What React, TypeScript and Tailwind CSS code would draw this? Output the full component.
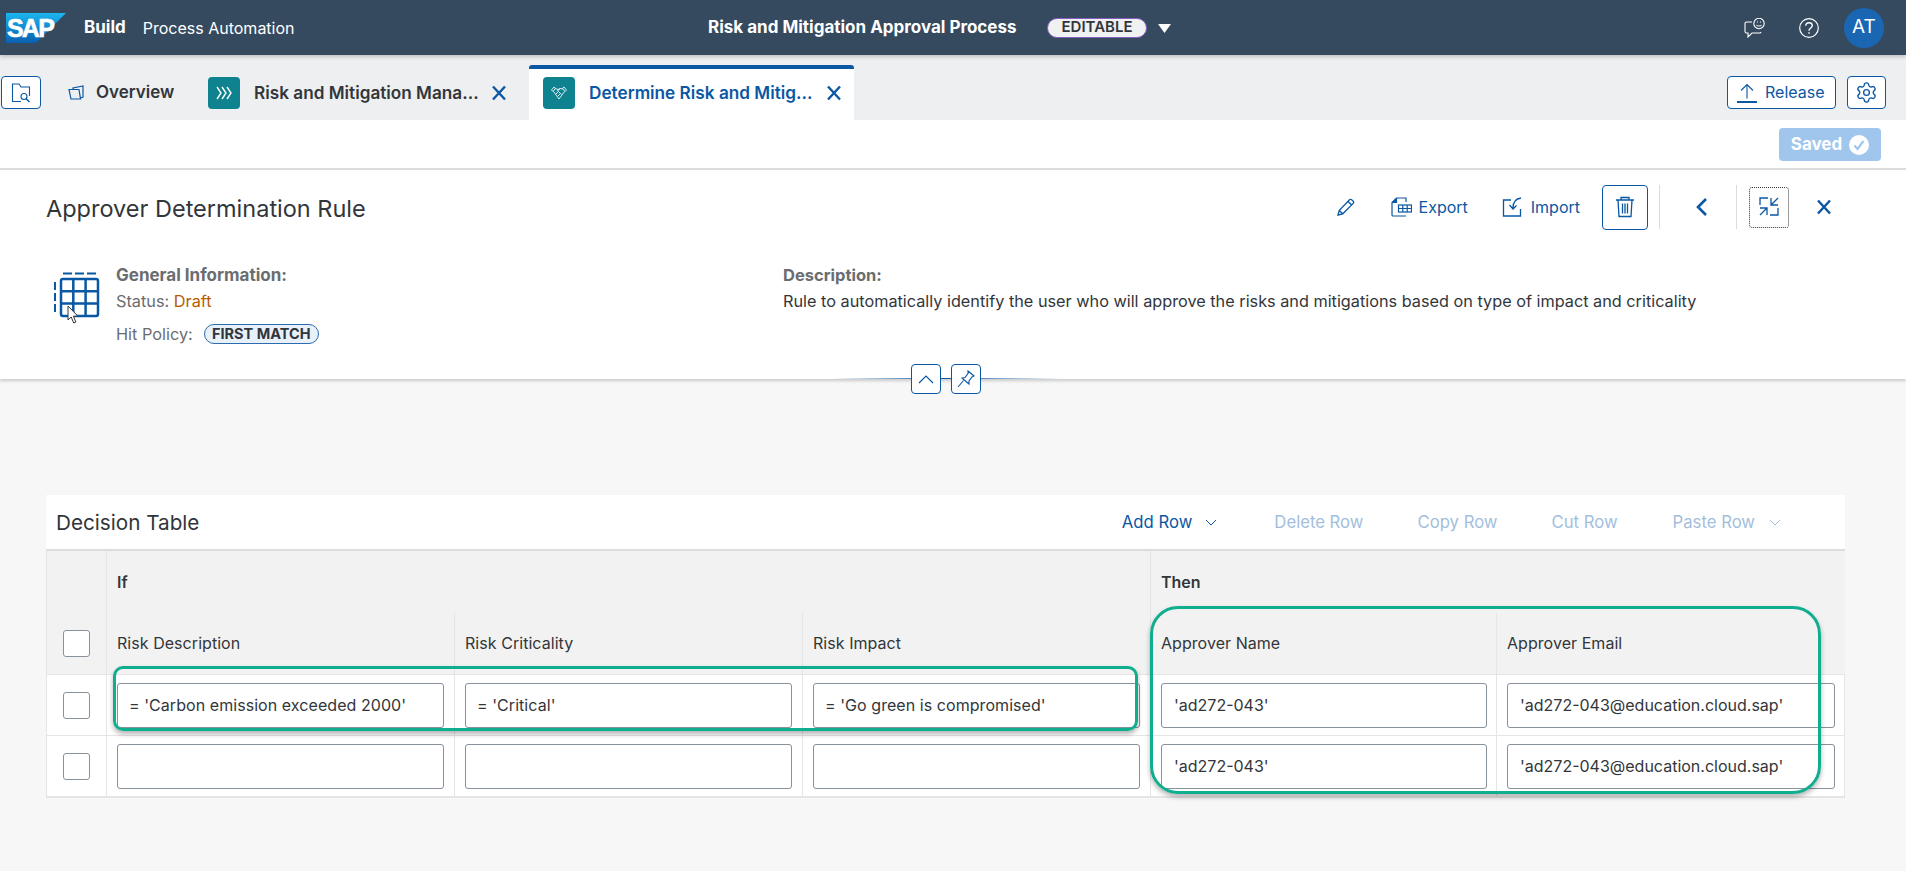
import React from "react";
import { Settings } from "lucide-react";

const B = "#0a57a4";

function XIcon({ size = 16, className = "" }: { size?: number; className?: string }) {
  return (
    <svg width={size} height={size} viewBox="0 0 16 16" className={className} fill="none" stroke={B} strokeWidth="2.400">
      <path d="M2 1.500 L14 14.500 M14 1.500 L2 14.500" />
    </svg>
  );
}

function SapLogo() {
  return (
    <svg width="60" height="30" viewBox="0 0 60 30" className="shrink-0">
      <defs>
        <linearGradient id="sapg" x1="0" y1="0" x2="0" y2="1">
          <stop offset="0" stopColor="#1bb6f0" />
          <stop offset="1" stopColor="#0a5fb0" />
        </linearGradient>
      </defs>
      <polygon points="0,0 60,0 30,30 0,30" fill="url(#sapg)" />
      <text x="1" y="24" fill="#fff" stroke="#fff" strokeWidth="0.600" fontFamily="'Liberation Sans',sans-serif" fontWeight="700" fontSize="25" letterSpacing="-1.800">SAP</text>
    </svg>
  );
}

function Tile({ children }: { children: React.ReactNode }) {
  return <div className="w-[32px] h-[32px] rounded-[4px] bg-[#0f828f] flex items-center justify-center shrink-0">{children}</div>;
}

function Input({ value = "", wide }: { value?: string; wide?: boolean }) {
  return (
    <div className={`h-[45px] w-full rounded-[3px] border border-[#89919a] bg-white flex items-center text-[#32363a] text-[16px] whitespace-nowrap overflow-hidden ${wide ? "pl-[11px] tracking-[0.06px]" : "pl-[12px]"}`}>
      {value}
    </div>
  );
}

function Check() {
  return <div className="w-[27px] h-[27px] rounded-[3px] border border-[#89919a] bg-white" />;
}

function Row({ values, last }: { values: string[]; last?: boolean }) {
  const b = last ? "border-b-2 border-[#e5e5e5]" : "border-b border-[#e5e5e5]";
  return (
    <>
      <div className={`${b} border-l border-[#e5e5e5] flex items-center justify-center bg-white`}><Check /></div>
      {values.map((v, i) => (
        <div key={i} className={`${b} border-l ${i === 4 ? "border-r" : ""} border-[#e5e5e5] bg-white flex items-center pl-[10px] ${i >= 3 ? "pr-[9px]" : "pr-[10px]"}`}>
          <Input value={v} wide={i < 3} />
        </div>
      ))}
    </>
  );
}

export default function App() {
  return (
    <div className="w-full h-[871px] overflow-hidden bg-[#f7f7f7] text-[#32363a] text-[16px] font-['Inter','Liberation_Sans',sans-serif]">
      {/* shell bar */}
      <header className="h-[55px] bg-[#354a5f] flex items-center text-white relative shadow-[0_2px_4px_rgba(0,0,0,0.2)] z-10">
        <div className="w-[708px] shrink-0 flex items-center">
          <div className="ml-[6px]"><SapLogo /></div>
          <span className="ml-[18px] font-bold text-[17px]">Build</span>
          <span className="ml-[17px] text-[16px]">Process Automation</span>
        </div>
        <span className="w-[339px] shrink-0 font-bold text-[17px] whitespace-nowrap">Risk and Mitigation Approval Process</span>
        <span className="w-[100px] h-[20px] rounded-full bg-[#eff1f3] border border-[#8a5cc0] text-[#32363a] text-[15px] font-semibold flex items-center justify-center">EDITABLE</span>
        <svg width="13" height="10" viewBox="0 0 13 10" className="ml-[11px]"><path d="M0 1h13L6.500 10z" fill="#fff" /></svg>
        <div className="ml-auto flex items-center">
          <svg width="21" height="20" viewBox="0 0 21 20" fill="none" stroke="#fff" strokeWidth="1.100">
            <path d="M8 4H2.500A1.500 1.500 0 0 0 1 5.500v8A1.500 1.500 0 0 0 2.500 15H4v4l4-4h8a1.500 1.500 0 0 0 1-1" />
            <circle cx="15" cy="5.500" r="5.200" />
            <path d="M12.500 7c1.300 1.400 3.700 1.400 5 0M13 4h1M16 4h1" />
          </svg>
          <svg width="20" height="20" viewBox="0 0 20 20" fill="none" stroke="#fff" strokeWidth="1.200" className="ml-[34px]">
            <circle cx="10" cy="10" r="9.300" />
            <path d="M6.800 7.800c0-1.900 1.400-3.100 3.300-3.100s3.200 1.200 3.200 2.800c0 2.500-3.300 2.500-3.300 5.200M10 14.300v1.500" strokeWidth="1.400" />
          </svg>
          <div className="ml-[25px] mr-[22px] w-[40px] h-[40px] rounded-full bg-[#1b66b3] flex items-center justify-center text-[19px]">AT</div>
        </div>
      </header>

      {/* tabs */}
      <div className="h-[65px] bg-[#edeff0] flex">
        <div className="mt-[21px] ml-[1px] w-[40px] h-[33px] border border-[#0a57a4] rounded-[4px] bg-white flex items-center justify-center">
          <svg width="20" height="20" viewBox="0 0 20 20" fill="none" stroke={B} strokeWidth="1.100">
            <path d="M10 18.500H1.500V1h6.500l2 3h8.500v9" />
            <circle cx="13" cy="13.500" r="3" /><path d="M15.200 15.700l3.300 3.300" strokeWidth="1.500" />
          </svg>
        </div>
        <div className="mt-[21px] h-[33px] flex items-center ml-[27px]">
          <svg width="16" height="15" viewBox="0 0 16 15" fill="none" stroke={B} strokeWidth="1.200">
            <path d="M1 4.500h10l1.500 9.500H3zM5 4.500V3l10-2v11l-2.500 1" />
          </svg>
          <span className="ml-[12px] font-semibold text-[17px] w-[112px]">Overview</span>
        </div>
        <div className="mt-[22px] h-[32px] flex items-center">
          <Tile>
            <svg width="18" height="18" viewBox="0 0 18 18" fill="none" stroke="#fff" strokeWidth="1.400"><path d="M2 3l4 6-4 6M7 3l4 6-4 6M12 3l4 6-4 6" /></svg>
          </Tile>
          <span className="ml-[14px] w-[237px] font-semibold text-[17.200px] whitespace-nowrap">Risk and Mitigation Mana...</span>
          <XIcon />
        </div>
        <div className="ml-[22px] mt-[10px] w-[325px] h-[55px] bg-white border-t-4 border-[#0a57a4] rounded-t-[3px] flex items-start pl-[14px] pt-[8px]">
          <Tile>
            <svg width="16" height="14" viewBox="0 0 16 14" fill="none" stroke="#fff" strokeWidth="1" opacity="0.85">
              <path d="M0.500 4l2.500-3 1.500 1.200L2 5.500zM15.500 4L13 1l-1.500 1.200L14 5.500zM4 2.500L7 3.500 9 2.500l3 .5M2.500 5.500L8 13l5.500-7.500M6 5l3-2M5 8l2.500-2.500 3 3M7 10l2-2" />
            </svg>
          </Tile>
          <span className="ml-[14px] w-[237px] h-[32px] flex items-center font-semibold text-[17.200px] text-[#0a57a4] whitespace-nowrap">Determine Risk and Mitig...</span>
          <div className="h-[32px] flex items-center"><XIcon /></div>
        </div>
        <div className="mt-[21px] ml-auto flex items-start">
          <div className="w-[109px] h-[33px] border border-[#0a57a4] rounded-[4px] bg-white flex items-center text-[#0a57a4] pl-[9px]">
            <svg width="20" height="20" viewBox="0 0 20 20" fill="none" stroke={B} strokeWidth="1.100"><path d="M10 15.500V1.500M4 7.500l6-6 6 6" /><path d="M0 19h20" strokeWidth="2" /></svg>
            <span className="ml-[8px] -mt-[2px]">Release</span>
          </div>
          <div className="ml-[11px] mr-[20px] w-[39px] h-[33px] border border-[#0a57a4] rounded-[4px] bg-white flex items-center justify-center">
            <Settings size={23} color={B} strokeWidth={1.400} />
          </div>
        </div>
      </div>

      {/* saved bar */}
      <div className="h-[50px] bg-white border-b-2 border-[#dcdcdc] flex justify-end items-start pt-[8px] pr-[25px]">
        <div className="w-[102px] h-[33px] rounded-[4px] bg-[#a0c6ee] text-white font-bold text-[17px] flex items-center justify-center">
          Saved
          <svg width="20" height="20" viewBox="0 0 20 20" className="ml-[7px]"><circle cx="10" cy="10" r="10" fill="#fff" /><path d="M5.500 10.500l3 3.500 6-8" fill="none" stroke="#a0c6ee" strokeWidth="2.200" /></svg>
        </div>
      </div>

      {/* object header */}
      <section className="relative h-[209px] bg-white shadow-[0_2px_3px_rgba(0,0,0,0.18)]">
        <div className="h-[44px] pt-[15px] box-content flex items-center pl-[46px] pr-[72px]">
          <h1 className="text-[23.500px] font-normal mt-[3px]">Approver Determination Rule</h1>
          <div className="ml-auto flex items-center text-[#0a57a4]">
            <svg width="18" height="18" viewBox="0 0 18 18" fill="none" stroke={B} strokeWidth="1.300"><path d="M1 17l1.200-4.500L12.500 1.800a1.500 1.500 0 0 1 2.200 0l1.500 1.400a1.500 1.500 0 0 1 0 2.200L5.800 15.800zM2.200 12.500L5.800 15.800M11 3.500l3.500 3.300" /></svg>
            <svg width="21" height="20" viewBox="0 0 21 20" fill="none" stroke={B} strokeWidth="1.200" className="ml-[36px]">
              <path d="M15 5V1H5.500L1 5.500V18a1 1 0 0 0 1 1h13" />
              <path d="M5.500 1v4.500H1" fill={B} />
              <rect x="7.500" y="8" width="13" height="7" fill="#fff" />
              <path d="M7.500 11.500h13M11.800 8v7M16.200 8v7" />
            </svg>
            <span className="ml-[7px]">Export</span>
            <svg width="22" height="20" viewBox="0 0 22 20" fill="none" stroke={B} strokeWidth="1.300" className="ml-[34px]">
              <path d="M9 3H1.500v16h17v-7" /><path d="M19 1c-4 .5-8 3-8 10M7.500 8l3.500 4 3.500-3.500" />
            </svg>
            <span className="ml-[7px]">Import</span>
            <div className="ml-[22px] w-[46px] h-[45px] border border-[#0a57a4] rounded-[4px] flex items-center justify-center">
              <svg width="20" height="22" viewBox="0 0 20 22" fill="none" stroke={B} strokeWidth="1.300">
                <path d="M1 4h18M6 4V1.500h8V4M3 4l1 16.500h12L17 4M7.500 7.500v10M10 7.500v10M12.500 7.500v10" />
              </svg>
            </div>
            <div className="ml-[11px] w-px h-[44px] bg-[#dcdcdc]" />
            <svg width="12" height="20" viewBox="0 0 12 20" fill="none" stroke={B} strokeWidth="2.600" className="ml-[36px]"><path d="M10 2L2 10l8 8" /></svg>
            <div className="ml-[28px] w-px h-[44px] bg-[#dcdcdc]" />
            <div className="ml-[12px] w-[40px] h-[41px] border border-dotted border-[#32363a] rounded-[3px] flex items-center justify-center">
              <svg width="20" height="20" viewBox="0 0 20 20" fill="none" stroke={B} strokeWidth="1.300">
                <path d="M1 8V1h8M19 1l-7 7M12 1v7h7M19 11v7h-8M1 18l7-7M1 11h7v7" />
              </svg>
            </div>
            <div className="ml-[27px] mr-[2px]"><XIcon /></div>
          </div>
        </div>
        <div className="flex mt-[35px] pl-[54px] text-[#6a6d70]">
          <div className="w-[62px] shrink-0">
            <svg width="46" height="54" viewBox="0 0 46 54" className="mt-[8px]" fill="none" stroke={B}>
              <path d="M9 1.500h9M21 1.500h9M33 1.500h9" strokeWidth="2" />
              <path d="M1 10v8M1 21v8M1 32v8" strokeWidth="2" />
              <rect x="7" y="7" width="37" height="37" rx="2" strokeWidth="2.500" />
              <path d="M19.300 7v37M31.600 7v37M7 19.300h37M7 31.600h37" strokeWidth="2.500" />
              <path d="M14 34v14l3.200-3 2.500 6 2.200-1-2.500-5.800 4.300-.2z" fill="#fff" stroke="#32363a" strokeWidth="1" />
            </svg>
          </div>
          <div className="w-[667px] shrink-0">
            <div className="font-bold text-[17px] h-[23px] leading-[22px]">General Information:</div>
            <div className="h-[28px] leading-[28px] text-[16.300px]">Status: <span className="text-[#b85c00]">Draft</span></div>
            <div className="mt-[7px] h-[24px] flex items-center text-[16.300px]">
              Hit Policy:
              <span className="ml-[11px] w-[115px] h-[20px] rounded-full border border-[#2b6cb0] bg-[#e8f1fa] text-[#32363a] text-[14.500px] font-bold flex items-center justify-center">FIRST MATCH</span>
            </div>
          </div>
          <div>
            <div className="font-bold text-[16.500px] h-[23px] leading-[22px]">Description:</div>
            <div className="h-[28px] leading-[28px] text-[16.250px] text-[#32363a] whitespace-nowrap">Rule to automatically identify the user who will approve the risks and mitigations based on type of impact and criticality</div>
          </div>
        </div>
        {/* expander */}
        <div className="absolute left-[831px] top-[194px] w-[230px] h-[30px] flex items-center justify-center">
          <div className="absolute left-0 right-0 top-[14px] h-px bg-gradient-to-r from-transparent via-[#0a57a4] to-transparent" />
          <div className="relative w-[30px] h-[30px] border border-[#0a57a4] rounded-[4px] bg-white flex items-center justify-center">
            <svg width="16" height="10" viewBox="0 0 16 10" fill="none" stroke={B} strokeWidth="1.200"><path d="M1 9l7-7 7 7" /></svg>
          </div>
          <div className="relative ml-[10px] w-[30px] h-[30px] border border-[#0a57a4] rounded-[4px] bg-white flex items-center justify-center">
            <svg width="18" height="18" viewBox="0 0 18 18" fill="none" stroke={B} strokeWidth="1.100"><path d="M11 1l6 5-2 1-3 4 0 3-7-6 3-.5 3-4zM6.500 10.500L1 17" /></svg>
          </div>
        </div>
      </section>

      {/* decision table */}
      <section className="relative mx-[46px] mt-[116px] w-[1799px]">
        <div className="h-[56px] bg-white border-b-2 border-[#dcdcdc] flex items-center pl-[10px] pt-[2px]">
          <h2 className="text-[20.700px] font-normal">Decision Table</h2>
          <div className="ml-auto flex items-center text-[16.700px] text-[#0a57a4]">
            <span>Add Row</span>
            <svg width="12" height="8" viewBox="0 0 12 8" fill="none" stroke={B} className="ml-[13px]"><path d="M1 1l5 5 5-5" /></svg>
            <span className="ml-[57px] text-[#a3bedc]">Delete Row</span>
            <span className="ml-[54px] text-[#a3bedc]">Copy Row</span>
            <span className="ml-[54px] text-[#a3bedc]">Cut Row</span>
            <span className="ml-[55px] text-[#a3bedc]">Paste Row</span>
            <svg width="12" height="8" viewBox="0 0 12 8" fill="none" stroke="#a3bedc" className="ml-[14px] mr-[64px]"><path d="M1 1l5 5 5-5" /></svg>
          </div>
        </div>
        <div className="grid grid-cols-[60px_348px_348px_348px_346px_349px] grid-rows-[62px_62px_61px_62px]">
          <div className="row-span-2 bg-[#f2f2f2] border-b border-l border-[#e5e5e5] flex items-end justify-center pb-[17px]"><Check /></div>
          <div className="col-span-3 bg-[#f2f2f2] border-l border-[#e5e5e5] flex items-center pl-[10px] font-semibold">If</div>
          <div className="col-span-2 bg-[#f2f2f2] border-l border-[#e5e5e5] flex items-center pl-[10px] font-semibold">Then</div>
          {["Risk Description", "Risk Criticality", "Risk Impact", "Approver Name", "Approver Email"].map((h) => (
            <div key={h} className="bg-[#f2f2f2] border-b border-l border-[#e5e5e5] flex items-center pl-[10px] pb-[2px] tracking-[0.05px]">{h}</div>
          ))}
          <Row values={["= 'Carbon emission exceeded 2000'", "= 'Critical'", "= 'Go green is compromised'", "'ad272-043'", "'ad272-043@education.cloud.sap'"]} />
          <Row last values={["", "", "", "'ad272-043'", "'ad272-043@education.cloud.sap'"]} />
        </div>
        {/* hand-drawn callouts */}
        <div className="absolute left-[67px] top-[171px] w-[1025px] h-[65px] rounded-[10px] border-[3px] border-[#0fae8f] shadow-[0_3px_5px_rgba(0,0,0,0.3)]" />
        <div className="absolute left-[1104px] top-[111px] w-[671px] h-[188px] rounded-[28px] border-[3px] border-[#0fae8f] shadow-[0_3px_5px_rgba(0,0,0,0.3)]" />
      </section>
    </div>
  );
}
